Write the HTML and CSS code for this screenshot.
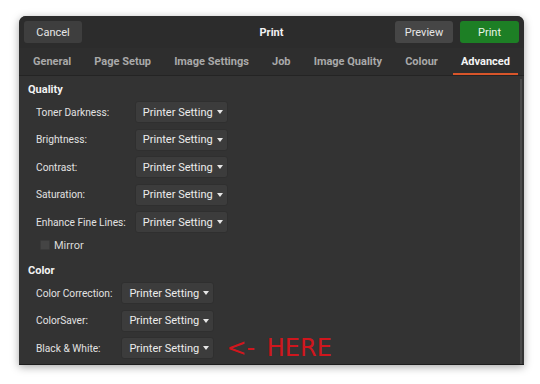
FILE: index.html
```html
<!DOCTYPE html>
<html lang="en">
<head>
  <meta charset="UTF-8" />
  <title>Print</title>
  <link rel="stylesheet" href="styles.css">
</head>
<body>
  <div class="window">
    <header class="titlebar">
      <button class="btn">Cancel</button>
      <h1 class="title">Print</h1>
      <div class="actions">
        <button class="btn">Preview</button>
        <button class="btn btn-print">Print</button>
      </div>
    </header>

    <nav class="tabs">
      <span class="tab">General</span>
      <span class="tab">Page Setup</span>
      <span class="tab">Image Settings</span>
      <span class="tab">Job</span>
      <span class="tab">Image Quality</span>
      <span class="tab">Colour</span>
      <span class="tab active">Advanced</span>
    </nav>

    <main class="content">
      <h2 class="section">Quality</h2>
      <div class="options">
        <label>Toner Darkness:</label>
        <div class="cell"><span class="combo">Printer Setting <i class="caret"></i></span></div>
        <label>Brightness:</label>
        <div class="cell"><span class="combo">Printer Setting <i class="caret"></i></span></div>
        <label>Contrast:</label>
        <div class="cell"><span class="combo">Printer Setting <i class="caret"></i></span></div>
        <label>Saturation:</label>
        <div class="cell"><span class="combo">Printer Setting <i class="caret"></i></span></div>
        <label>Enhance Fine Lines:</label>
        <div class="cell"><span class="combo">Printer Setting <i class="caret"></i></span></div>
      </div>
      <div class="check"><span class="box"></span>Mirror</div>

      <h2 class="section color">Color</h2>
      <div class="options">
        <label>Color Correction:</label>
        <div class="cell"><span class="combo">Printer Setting <i class="caret"></i></span></div>
        <label>ColorSaver:</label>
        <div class="cell"><span class="combo">Printer Setting <i class="caret"></i></span></div>
        <label>Black &amp; White:</label>
        <div class="cell"><span class="combo">Printer Setting <i class="caret"></i></span><span class="here">&lt;- HERE</span></div>
      </div>
      <div class="scrollbar"></div>
    </main>
  </div>
</body>
</html>
```

FILE: styles.css
```css
body {
  margin: 0;
  background: #fff;
  padding: 16px 16px 19px 19px;
  font-family: Roboto, 'Noto Sans', sans-serif;
  font-size: 11px;
  color: #e8e8e8;
}

.window {
  width: 505px;
  height: 349px;
  background: #333333;
  border-radius: 7px 7px 0 0;
  border-bottom: 1px solid #1d1d1d;
  box-shadow: 0 2px 8px rgba(0, 0, 0, 0.35);
  overflow: hidden;
  box-sizing: border-box;
  display: flex;
  flex-direction: column;
}

.titlebar {
  height: 32px;
  background: #2c2c2c;
  display: flex;
  align-items: center;
  padding: 0 5px;
  position: relative;
}

.title {
  position: absolute;
  left: 0;
  right: 0;
  text-align: center;
  margin: 0;
  font-size: 11px;
  font-weight: bold;
  color: #f2f2f2;
  pointer-events: none;
}

.actions {
  margin-left: auto;
  display: flex;
  gap: 7px;
}

.btn {
  width: 58px;
  height: 22px;
  border: none;
  border-radius: 3px;
  background: #3e3e3e;
  color: #e6e6e6;
  font-family: inherit;
  font-size: 11px;
  padding: 0;
}

.actions .btn {
  background: #464646;
}

.actions .btn-print {
  width: 59px;
  background: #1d7f25;
  color: #e8f5e8;
}

.tabs {
  height: 27px;
  background: #2e2e2e;
  border-bottom: 1px solid #242424;
  display: flex;
  justify-content: space-between;
  padding: 0 6px;
}

.tab {
  padding: 0 8px;
  display: flex;
  align-items: center;
  font-weight: bold;
  color: #a9a9a9;
  border-bottom: 2px solid transparent;
  padding-top: 2px;
  white-space: nowrap;
}

.tab.active {
  color: #f4f4f4;
  border-bottom-color: #d8552a;
}

.content {
  flex: 1;
  position: relative;
  padding: 6px 0 0 9px;
}

.section {
  margin: 0 0 3px;
  height: 16px;
  line-height: 16px;
  font-size: 11px;
  font-weight: bold;
  color: #f2f2f2;
}

.section.color {
  margin-top: 11px;
}

.options {
  display: grid;
  grid-template-columns: auto auto;
  justify-content: start;
  column-gap: 9px;
  row-gap: 5.5px;
  padding-left: 8px;
  align-items: center;
}

.options label {
  color: #e2e2e2;
  font-size: 10.2px;
  white-space: nowrap;
}

.cell {
  display: flex;
  align-items: center;
}

.combo {
  width: 93px;
  height: 22px;
  box-sizing: border-box;
  background: #3c3c3c;
  border: 1px solid #2f2f2f;
  border-radius: 3px;
  display: flex;
  align-items: center;
  padding-left: 7px;
  color: #ececec;
  white-space: nowrap;
}

.caret {
  margin-left: 4px;
  width: 0;
  height: 0;
  border-left: 3.5px solid transparent;
  border-right: 3.5px solid transparent;
  border-top: 4px solid #e6e6e6;
}

.here {
  margin-left: 12px;
  font-family: 'DejaVu Sans', sans-serif;
  font-size: 24px;
  line-height: 22px;
  color: #d0161d;
  white-space: nowrap;
  word-spacing: 4px;
}

.check {
  margin: 5px 0 0 12px;
  height: 14px;
  display: flex;
  align-items: center;
  color: #dadada;
}

.box {
  width: 10px;
  height: 10px;
  background: #444;
  border: 1px solid #3a3a3a;
  box-sizing: border-box;
  border-radius: 1px;
  margin-right: 4px;
}

.scrollbar {
  position: absolute;
  right: 2px;
  top: 3px;
  bottom: 0;
  width: 2px;
  background: #484848;
}
```
